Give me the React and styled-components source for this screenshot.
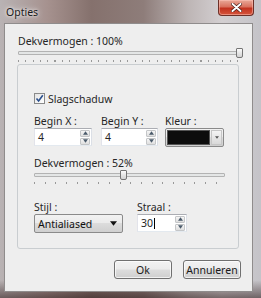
import React from "react";
import styled, { createGlobalStyle } from "styled-components";

const GlobalStyle = createGlobalStyle`
  html, body { margin: 0; padding: 0; }
  body {
    width: 261px;
    height: 298px;
    overflow: hidden;
    font-family: "Noto Sans", "DejaVu Sans", sans-serif;
    font-size: 10.5px;
    color: #262626;
  }
`;

const Window = styled.div`
  width: 261px;
  height: 298px;
  box-sizing: border-box;
  display: flex;
  flex-direction: column;
  padding: 0 8px 6px 4px;
  background:
    linear-gradient(180deg, rgba(255,255,255,0) 0%, rgba(255,255,255,0) 94%, rgba(40,20,20,0.55) 100%),
    linear-gradient(90deg, #b9b3b4 0%, #a6928f 18%, #85716d 35%, #8e7d7a 55%, #bdb5b5 72%, #d3cfd1 85%, #c4c3c8 100%);
`;

const TitleBar = styled.div`
  height: 23px;
  display: flex;
  align-items: flex-start;
  justify-content: space-between;
`;

const Title = styled.span`
  margin: 5px 0 0 2px;
  font-size: 10.5px;
  color: #1a1a1a;
  text-shadow: 0 0 6px rgba(255, 255, 255, 0.9), 0 0 3px rgba(255, 255, 255, 0.9);
`;

const CloseButton = styled.div`
  width: 36px;
  height: 16px;
  margin-right: -1px;
  box-sizing: border-box;
  border: 1px solid #6d3028;
  border-top: none;
  border-radius: 0 0 4px 4px;
  background: linear-gradient(180deg, #e9a898 0%, #d9715e 45%, #c2321f 55%, #d5553c 100%);
  display: flex;
  align-items: center;
  justify-content: center;
  box-shadow: inset 0 0 0 1px rgba(255, 200, 190, 0.5);
`;

const Client = styled.div`
  flex: 1;
  box-sizing: border-box;
  background: #eeeeee;
  border: 1px solid #8f8c8c;
  display: flex;
  flex-direction: column;
  padding: 11px 11px 12px 13px;
`;

const Label = styled.div`
  height: 13px;
  line-height: 12px;
  white-space: nowrap;
  margin-top: ${(p) => p.$gap || 0}px;
`;

const SliderBox = styled.div`
  position: relative;
  height: 16px;
  width: ${(p) => (p.$width ? `${p.$width}px` : "auto")};
`;

const Track = styled.div`
  margin-top: 3px;
  height: 4px;
  box-sizing: border-box;
  border: 1px solid #b3b3b3;
  border-radius: 1px;
  background: #e4e6e6;
`;

const Ticks = styled.div`
  margin-top: 5px;
  height: 2px;
  background: repeating-linear-gradient(90deg, #999 0 1px, transparent 1px ${(p) => p.$step}px);
`;

const Thumb = styled.div`
  position: absolute;
  top: 0;
  width: 7px;
  height: 10px;
  box-sizing: border-box;
  border: 1px solid #757575;
  border-radius: 1px 1px 2px 2px;
  background: linear-gradient(180deg, #fbfbfb 0%, #e6e6e6 50%, #d3d3d3 100%);
`;

const Group = styled.div`
  margin-right: 2px;
  margin-left: -1px;
  box-sizing: border-box;
  border: 1px solid #c9cdd0;
  border-radius: 3px;
  display: flex;
  flex-direction: column;
  padding: 27px 14px 15px 16px;
`;

const CheckRow = styled.label`
  display: flex;
  align-items: center;
  gap: 3px;
  height: 13px;
`;

const CheckBox = styled.span`
  width: 11px;
  height: 11px;
  box-sizing: border-box;
  border: 1px solid #8a8a8a;
  background: linear-gradient(135deg, #e3e3e3, #ffffff);
  display: flex;
  align-items: center;
  justify-content: center;
`;

const Row = styled.div`
  display: flex;
  gap: ${(p) => p.$gap}px;
  margin-top: ${(p) => p.$top}px;
`;

const Field = styled.div`
  display: flex;
  flex-direction: column;
  width: ${(p) => p.$width}px;
  margin-left: ${(p) => p.$shift || 0}px;
`;

const TextBox = styled.div`
  height: 18px;
  box-sizing: border-box;
  border: 1px solid #abadb3;
  border-color: #abadb3 #dbdfe6 #e3e9ef #e2e3ea;
  background: #fff;
  display: flex;
  align-items: center;
  padding-left: 3px;
  padding-right: 1px;
`;

const Value = styled.span`
  flex: 1;
  line-height: 14px;
`;

const Caret = styled.span`
  display: inline-block;
  width: 1px;
  height: 11px;
  background: #000;
  vertical-align: -2px;
  margin-left: 1px;
`;

const Spin = styled.div`
  width: 10px;
  display: flex;
  flex-direction: column;
  gap: 1px;
`;

const SpinButton = styled.div`
  height: 7px;
  box-sizing: border-box;
  border: 1px solid #c4c6c8;
  border-radius: 1px;
  background: linear-gradient(180deg, #f6f6f6, #dedede);
  display: flex;
  align-items: center;
  justify-content: center;
`;

const Combo = styled.div`
  height: 19px;
  box-sizing: border-box;
  border: 1px solid #8a8a8a;
  border-radius: 2px;
  background: linear-gradient(180deg, #f2f2f2 0%, #ebebeb 45%, #dcdcdc 50%, #cfcfcf 100%);
  display: flex;
  align-items: center;
  padding: 1px;
  gap: 1px;
`;

const Swatch = styled.div`
  flex: 1;
  align-self: stretch;
  background: #0d0d0d;
  border: 1px solid #555;
`;

const ComboArrow = styled.div`
  width: 11px;
  align-self: stretch;
  box-sizing: border-box;
  border: 1px solid #c6c6c6;
  background: linear-gradient(180deg, #f4f4f4, #d9d9d9);
  display: flex;
  align-items: center;
  justify-content: center;
`;

const Select = styled(Combo)`
  padding: 0 5px 0 3px;
  justify-content: space-between;
  color: #111;
`;

const Footer = styled.div`
  display: flex;
  justify-content: flex-end;
  gap: 11px;
  margin-top: 11px;
`;

const Button = styled.button`
  width: 58px;
  height: 19px;
  box-sizing: border-box;
  padding: 0;
  border: 1px solid #707070;
  border-radius: 3px;
  background: linear-gradient(180deg, #f2f2f2 0%, #ebebeb 48%, #dddddd 52%, #cfcfcf 100%);
  box-shadow: inset 0 0 0 1px rgba(255, 255, 255, 0.7);
  font-family: "Noto Sans", "DejaVu Sans", sans-serif;
  font-size: 10.5px;
  color: #1a1a1a;
`;

const Arrow = ({ up, size = 5, color = "#4a5a6a" }) => (
  <svg width={size} height={Math.ceil(size / 2) + 1} viewBox="0 0 6 4">
    <path d={up ? "M0 4 L3 0 L6 4 Z" : "M0 0 L3 4 L6 0 Z"} fill={color} />
  </svg>
);

function Slider({ left, step, width }) {
  return (
    <SliderBox $width={width}>
      <Track />
      <Ticks $step={step} />
      <Thumb style={{ left }} />
    </SliderBox>
  );
}

function SpinField({ label, value, width, caret }) {
  return (
    <Field $width={width}>
      <Label>{label}</Label>
      <TextBox>
        <Value>
          {value}
          {caret && <Caret />}
        </Value>
        <Spin>
          <SpinButton><Arrow up /></SpinButton>
          <SpinButton><Arrow /></SpinButton>
        </Spin>
      </TextBox>
    </Field>
  );
}

export default function App() {
  return (
    <>
      <GlobalStyle />
      <Window>
        <TitleBar>
          <Title>Opties</Title>
          <CloseButton>
            <svg width="11" height="9" viewBox="0 0 11 9">
              <path d="M1.5 1 L9.5 8 M9.5 1 L1.5 8" stroke="#3b1410" strokeWidth="3.2" strokeLinecap="round" />
              <path d="M1.5 1 L9.5 8 M9.5 1 L1.5 8" stroke="#fff" strokeWidth="2" strokeLinecap="round" />
            </svg>
          </CloseButton>
        </TitleBar>
        <Client>
          <Label>Dekvermogen : 100%</Label>
          <Slider left={218} step={7.3} width={224} />
          <Group>
            <CheckRow>
              <CheckBox>
                <svg width="9" height="9" viewBox="0 0 9 9">
                  <path d="M1.5 4.5 L3.6 7 L7.8 1.2" stroke="#2a4f8c" strokeWidth="1.6" fill="none" />
                </svg>
              </CheckBox>
              Slagschaduw
            </CheckRow>
            <Row $gap={9} $top={10}>
              <SpinField label="Begin X :" value="4" width={58} />
              <SpinField label="Begin Y :" value="4" width={57} />
              <Field $width={59} $shift={-2}>
                <Label>Kleur :</Label>
                <Combo>
                  <Swatch />
                  <ComboArrow><Arrow size={4} color="#555" /></ComboArrow>
                </Combo>
              </Field>
            </Row>
            <Label $gap={10}>Dekvermogen : 52%</Label>
            <Slider left={86} step={10.7} width={191} />
            <Row $gap={14} $top={15}>
              <Field $width={89}>
                <Label>Stijl :</Label>
                <Select>
                  Antialiased
                  <Arrow size={7} color="#111" />
                </Select>
              </Field>
              <SpinField label="Straal :" value="30" width={50} caret />
            </Row>
          </Group>
          <Footer>
            <Button>Ok</Button>
            <Button>Annuleren</Button>
          </Footer>
        </Client>
      </Window>
    </>
  );
}
